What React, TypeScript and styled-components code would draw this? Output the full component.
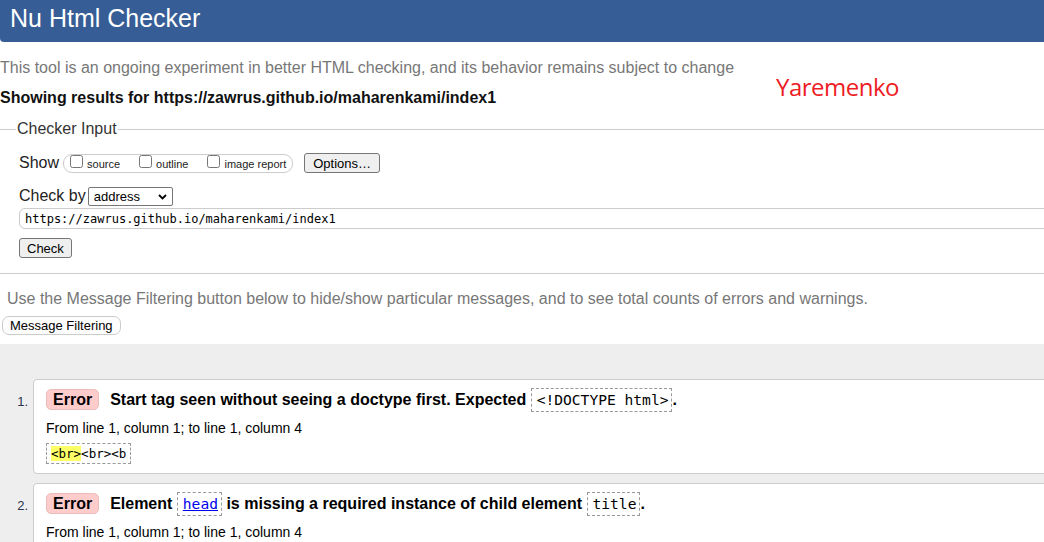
import React from "react";
import styled, { createGlobalStyle } from "styled-components";

const GlobalStyle = createGlobalStyle`
  html, body {
    margin: 0;
    padding: 0;
    overflow: hidden;
    background: #ffffff;
  }
  body {
    font-family: "Liberation Sans", Arial, sans-serif;
    color: #000;
  }
`;

const Page = styled.div`
  position: relative;
  width: 1100px;
  min-height: 542px;
  display: flex;
  flex-direction: column;
`;

const Header = styled.header`
  height: 42px;
  background: #365d95;
  border-bottom-left-radius: 4px;
`;

const Title = styled.h1`
  margin: 0;
  padding-left: 10px;
  font-size: 25px;
  line-height: 37px;
  font-weight: normal;
  color: #ffffff;
`;

const Note = styled.p<{ $top: number; $indent?: number }>`
  margin: ${(p) => p.$top}px 0 0;
  padding-left: ${(p) => p.$indent ?? 0}px;
  font-size: 16px;
  line-height: 20px;
  color: #777;
`;

const ResultsFor = styled.p`
  margin: 10px 0 0;
  font-size: 16px;
  line-height: 20px;
  font-weight: bold;
  color: #111;
`;

const Signature = styled.div`
  position: absolute;
  left: 776px;
  top: 75px;
  font-family: "Open Sans", "Noto Sans", sans-serif;
  font-size: 24px;
  line-height: 24px;
  letter-spacing: -0.5px;
  color: #ee1c25;
`;

const Fieldset = styled.fieldset`
  margin: 11px 0 0;
  padding: 0 0 15px 19px;
  border: none;
  border-top: 1px solid #cccccc;
  border-bottom: 1px solid #cccccc;
  min-width: 0;
`;

const Legend = styled.legend`
  margin-left: -3px;
  padding: 0 1px;
  font-size: 16px;
  line-height: 20px;
  color: #333;
`;

const FormRow = styled.div<{ $top: number }>`
  display: flex;
  align-items: center;
  margin-top: ${(p) => p.$top}px;
  height: 20px;
`;

const RowLabel = styled.span`
  font-size: 16px;
  line-height: 20px;
  color: #222;
`;

const CheckGroup = styled.div`
  display: flex;
  align-items: baseline;
  gap: 19px;
  box-sizing: border-box;
  height: 19px;
  margin-left: 4px;
  padding: 0 6px;
  border: 1px solid #cccccc;
  border-radius: 9px;
`;

const Option = styled.label`
  display: flex;
  align-items: baseline;
  font-size: 11px;
  line-height: 13px;
  color: #222;
`;

const Checkbox = styled.input`
  width: 13px;
  height: 13px;
  margin: 0 4px 0 0;
`;

const Button = styled.button<{ $pad: number; $top?: number; $left?: number }>`
  box-sizing: border-box;
  height: 20px;
  margin: ${(p) => p.$top ?? 0}px 0 0 ${(p) => p.$left ?? 0}px;
  padding: 0 ${(p) => p.$pad}px;
  font-family: "Liberation Sans", Arial, sans-serif;
  font-size: 13px;
  color: #000;
  background: #efefef;
  border: 1px solid #767676;
  border-radius: 3px;
`;

const SelectWrap = styled.span`
  position: relative;
  display: inline-block;
  margin-left: 2px;
`;

const Select = styled.select`
  appearance: none;
  -webkit-appearance: none;
  box-sizing: border-box;
  width: 85px;
  height: 19px;
  padding: 0 0 0 5px;
  font-family: "Liberation Sans", Arial, sans-serif;
  font-size: 13px;
  color: #000;
  background: #ffffff;
  border: 1px solid #767676;
  border-radius: 2px;
`;

const Chevron = styled.svg`
  position: absolute;
  right: 6px;
  top: 7px;
  pointer-events: none;
`;

const UrlInput = styled.input`
  display: block;
  box-sizing: border-box;
  width: 100%;
  height: 21px;
  margin-top: 2px;
  padding: 0 5px;
  font-family: "DejaVu Sans Mono", monospace;
  font-size: 12px;
  color: #000;
  border: 1px solid #cccccc;
  border-radius: 6px;
  outline: none;
`;

const FilterButton = styled.button`
  align-self: flex-start;
  box-sizing: border-box;
  height: 19px;
  margin: 7px 0 0 2px;
  padding: 0 7px;
  font-family: "Liberation Sans", Arial, sans-serif;
  font-size: 13px;
  color: #000;
  background: #fdfdfd;
  border: 1px solid #cccccc;
  border-radius: 7px;
`;

const Results = styled.section`
  flex: 1;
  margin-top: 9px;
  padding: 35px 0 40px;
  background: #eeeeee;
  display: flex;
  flex-direction: column;
  gap: 9px;
`;

const Item = styled.div`
  display: flex;
  align-items: flex-start;
`;

const ItemNumber = styled.span`
  box-sizing: border-box;
  width: 33px;
  padding: 15px 5px 0 0;
  text-align: right;
  font-size: 13px;
  line-height: 16px;
  color: #2a3550;
`;

const Card = styled.div`
  flex: 1;
  padding: 8px 12px 9px;
  background: #ffffff;
  border: 1px solid #cccccc;
  border-radius: 4px;
`;

const MessageRow = styled.div`
  display: flex;
  align-items: baseline;
`;

const Badge = styled.span`
  box-sizing: border-box;
  padding: 0 6px;
  font-size: 16px;
  line-height: 19px;
  font-weight: bold;
  background: #ffcccc;
  border: 1px solid #ecbcbc;
  border-radius: 5px;
`;

const Message = styled.span`
  margin-left: 11px;
  font-size: 16px;
  line-height: 20px;
  font-weight: bold;
  white-space: nowrap;
`;

const Code = styled.code`
  display: inline-block;
  padding: 2px 3px 2px 5px;
  font-family: "DejaVu Sans Mono", monospace;
  font-size: 14.6px;
  line-height: 18px;
  font-weight: normal;
  border: 1px dashed #999999;
`;

const CodeLink = styled.a`
  color: #0000ee;
  text-decoration: underline;
`;

const Location = styled.p`
  margin: 7px 0 0;
  font-size: 14px;
  line-height: 18px;
  color: #000;
`;

const Extract = styled.code`
  display: inline-block;
  margin-top: 6px;
  padding: 2px 4px;
  font-family: "DejaVu Sans Mono", monospace;
  font-size: 12.5px;
  line-height: 15px;
  border: 1px dashed #999999;
`;

const Highlight = styled.mark`
  background: #ffff66;
  color: #000;
`;

export default function App() {
  return (
    <>
      <GlobalStyle />
      <Page>
        <Header>
          <Title>Nu Html Checker</Title>
        </Header>
        <Note $top={16}>
          This tool is an ongoing experiment in better HTML checking, and its behavior remains subject to change
        </Note>
        <ResultsFor>Showing results for https://zawrus.github.io/maharenkami/index1</ResultsFor>
        <Signature>Yaremenko</Signature>

        <Fieldset>
          <Legend>Checker Input</Legend>
          <FormRow $top={14}>
            <RowLabel>Show</RowLabel>
            <CheckGroup>
              <Option>
                <Checkbox type="checkbox" />
                source
              </Option>
              <Option>
                <Checkbox type="checkbox" />
                outline
              </Option>
              <Option>
                <Checkbox type="checkbox" />
                image report
              </Option>
            </CheckGroup>
            <Button $pad={8} $left={11}>Options…</Button>
          </FormRow>
          <FormRow $top={13}>
            <RowLabel>Check by</RowLabel>
            <SelectWrap>
              <Select defaultValue="address">
                <option value="address">address</option>
                <option value="file">file upload</option>
                <option value="text">text input</option>
              </Select>
              <Chevron width="9" height="6" viewBox="0 0 9 6">
                <polyline points="1,1 4.5,4.5 8,1" fill="none" stroke="#000" strokeWidth="1.8" />
              </Chevron>
            </SelectWrap>
          </FormRow>
          <UrlInput type="url" defaultValue="https://zawrus.github.io/maharenkami/index1" />
          <Button $pad={7} $top={9}>Check</Button>
        </Fieldset>

        <Note $top={15} $indent={7}>
          Use the Message Filtering button below to hide/show particular messages, and to see total counts of errors and warnings.
        </Note>
        <FilterButton>Message Filtering</FilterButton>

        <Results>
          <Item>
            <ItemNumber>1.</ItemNumber>
            <Card>
              <MessageRow>
                <Badge>Error</Badge>
                <Message>
                  Start tag seen without seeing a doctype first. Expected <Code>&lt;!DOCTYPE html&gt;</Code>.
                </Message>
              </MessageRow>
              <Location>From line 1, column 1; to line 1, column 4</Location>
              <Extract>
                <Highlight>&lt;br&gt;</Highlight>&lt;br&gt;&lt;b
              </Extract>
            </Card>
          </Item>
          <Item>
            <ItemNumber>2.</ItemNumber>
            <Card>
              <MessageRow>
                <Badge>Error</Badge>
                <Message>
                  Element <Code><CodeLink href="#head">head</CodeLink></Code> is missing a required instance of child element <Code>title</Code>.
                </Message>
              </MessageRow>
              <Location>From line 1, column 1; to line 1, column 4</Location>
              <Extract>
                <Highlight>&lt;br&gt;</Highlight>&lt;br&gt;&lt;b
              </Extract>
            </Card>
          </Item>
        </Results>
      </Page>
    </>
  );
}
